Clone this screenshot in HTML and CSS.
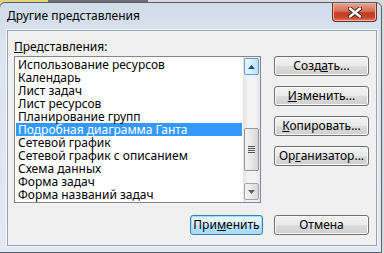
FILE: index.html
```html
<!DOCTYPE html>
<html lang="ru">
<head>
<meta charset="UTF-8">
<title>Другие представления</title>
<link rel="stylesheet" href="styles.css">
</head>
<body>

<div class="window">
    <!-- title bar -->
    <div class="titlebar">
        <span class="title">Другие представления</span>
        <button class="close" aria-label="Закрыть">
            <svg viewBox="0 0 14 11">
                <path d="M2 1.5L12 9.5M12 1.5L2 9.5" stroke="#3b2620" stroke-width="4.2" stroke-linecap="round"/>
                <path d="M2 1.5L12 9.5M12 1.5L2 9.5" stroke="#fff" stroke-width="2.3" stroke-linecap="round"/>
            </svg>
        </button>
    </div>

    <div class="client">
        <div class="label"><u>П</u>редставления:</div>

        <div class="main">
            <!-- list of views -->
            <div class="listbox">
                <ul class="items">
                    <li>Использование ресурсов</li>
                    <li>Календарь</li>
                    <li>Лист задач</li>
                    <li>Лист ресурсов</li>
                    <li>Планирование групп</li>
                    <li class="selected">Подробная диаграмма Ганта</li>
                    <li>Сетевой график</li>
                    <li>Сетевой график с описанием</li>
                    <li>Схема данных</li>
                    <li>Форма задач</li>
                    <li>Форма названий задач</li>
                </ul>
                <div class="scrollbar">
                    <div class="sb-btn up">
                        <svg viewBox="0 0 7 4"><path d="M0 4L3.5 0L7 4z"/></svg>
                    </div>
                    <div class="thumb"><span class="grip"></span></div>
                    <div class="sb-btn down">
                        <svg viewBox="0 0 7 4"><path d="M0 0L7 0L3.5 4z"/></svg>
                    </div>
                </div>
            </div>

            <!-- side buttons -->
            <div class="side">
                <button class="btn">Созд<u>а</u>ть...</button>
                <button class="btn"><u>И</u>зменить...</button>
                <button class="btn"><u>К</u>опировать...</button>
                <button class="btn">Ор<u>г</u>анизатор...</button>
            </div>
        </div>

        <div class="footer">
            <button class="btn default">При<u>м</u>енить</button>
            <button class="btn wide">Отмена</button>
        </div>
    </div>
</div>

</body>
</html>
```

FILE: styles.css
```css
/* =====  PAGE  ===== */
*{box-sizing:border-box;margin:0;padding:0;}
body{
    width:384px;
    height:253px;
    overflow:hidden;
    font-family:"Noto Sans","Liberation Sans",sans-serif;
    font-size:12px;
    color:#000;
    background:linear-gradient(to right,#e4d27e 0 48px,#6f6f6f 48px 148px,#d9d9d9 148px);
}

/* =====  WINDOW FRAME  ===== */
.window{
    width:383px;
    height:251px;
    margin:2px 0 0 -1px;
    padding:0 4px 0 7px;
    border:1px solid #56606c;
    border-radius:6px 6px 0 0;
    background:linear-gradient(#cfdcea,#dbe4ef 40px,#e2e9f2);
}
.titlebar{
    height:27px;
    display:flex;
    align-items:flex-start;
    justify-content:space-between;
}
.title{
    padding-top:5px;
    line-height:15px;
}
.close{
    width:45px;
    height:19px;
    border:1px solid #6b2f24;
    border-top:none;
    border-radius:0 0 4px 4px;
    background:linear-gradient(#e8a494,#d66f58 45%,#c43b20 55%,#c9462a 80%,#e07f5d);
    box-shadow:inset 0 0 0 1px #f1b6a6;
    display:flex;
    align-items:center;
    justify-content:center;
}
.close svg{width:14px;height:11px;}

/* =====  CLIENT AREA  ===== */
.client{
    height:216px;
    padding:0 7px 0 6px;
    border:1px solid #95a2b1;
    background:#f0f0f0;
    box-shadow:0 0 0 1px #f5f8fb;
}
.label{
    padding-top:8px;
    height:25px;
    line-height:15px;
}
.main{
    display:flex;
    gap:13px;
}

/* list box */
.listbox{
    width:247px;
    height:147px;
    border:1px solid #828790;
    background:#fff;
    display:flex;
}
.items{
    flex:1;
    list-style:none;
    padding:1px 1px 0;
}
.items li{
    height:13px;
    line-height:13px;
    padding-left:2px;
    white-space:nowrap;
}
.items li.selected{
    background:#3399ff;
    color:#fff;
}

/* scrollbar */
.scrollbar{
    width:17px;
    padding:1px;
    display:flex;
    flex-direction:column;
    background:linear-gradient(to right,#e3e3e3,#f3f3f3 30%,#f3f3f3 70%,#e8e8e8);
}
.sb-btn{
    height:17px;
    border:1px solid #a3a3a3;
    border-radius:2px;
    background:linear-gradient(to right,#f2f2f2,#e9e9e9 50%,#d8d8d8);
    display:flex;
    align-items:center;
    justify-content:center;
}
.sb-btn svg{width:7px;height:4px;fill:#606060;}
.sb-btn.up{
    border-color:#5c9ed1;
    background:linear-gradient(to right,#e7f5fd,#d7effc 50%,#b9e1f8);
}
.sb-btn.up svg{fill:#264a73;}
.sb-btn.down{margin-top:auto;margin-bottom:1px;}
.thumb{
    height:43px;
    margin-top:53px;
    border:1px solid #979797;
    border-radius:2px;
    background:linear-gradient(to right,#f3f3f3,#e8e8e8 50%,#d5d5d5);
    display:flex;
    align-items:center;
    justify-content:center;
}
.grip{
    width:7px;
    height:8px;
    background:repeating-linear-gradient(#555 0 1px,#eee 1px 2px);
}

/* buttons */
.side{
    display:flex;
    flex-direction:column;
    gap:10px;
}
.btn{
    width:95px;
    height:20px;
    font:inherit;
    line-height:16px;
    color:#000;
    border:1px solid #707070;
    border-radius:3px;
    background:linear-gradient(#f2f2f2,#ebebeb 49%,#dddddd 50%,#cfcfcf);
    box-shadow:inset 0 0 0 1px #fbfbfb;
}
.btn u{text-underline-offset:1px;}
.footer{
    display:flex;
    justify-content:flex-end;
    gap:11px;
    margin-top:12px;
}
.btn.default{
    width:73px;
    border-color:#3c7fb1;
    background:linear-gradient(#eaf6fd,#d9f0fc 49%,#bee6fd 50%,#a7d9f5);
    box-shadow:inset 0 0 0 1px #9ee1fb;
}
```
